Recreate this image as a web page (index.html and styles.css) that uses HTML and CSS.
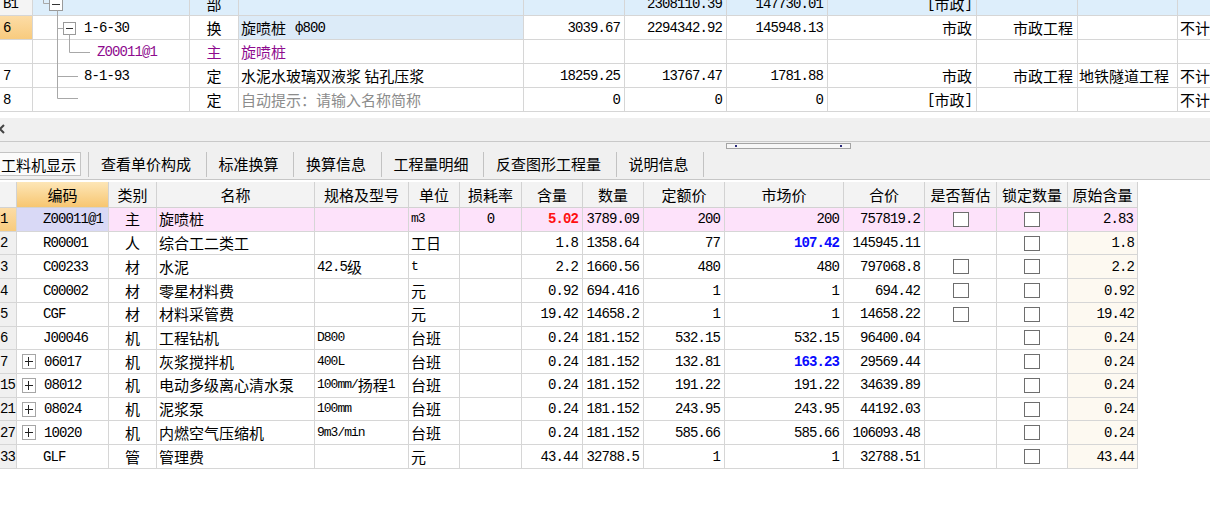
FILE: index.html
```html
<!DOCTYPE html>
<html lang="zh-CN">
<head>
<meta charset="utf-8">
<link rel="stylesheet" href="styles.css">
</head>
<body>
<div class="top">
  <svg class="tree" width="120" height="112" viewBox="0 0 120 112">
    <path d="M43.5 0 V3.5 H49" class="tl"/>
    <rect x="49.5" y="-2.5" width="13" height="13" class="tb"/>
    <path d="M52 4.5 H60" class="tm"/>
    <path d="M57.5 10.5 V98.5" class="tl"/>
    <path d="M57.5 28.5 H63" class="tl"/>
    <rect x="63.5" y="22.5" width="12" height="12" class="tb"/>
    <path d="M66 28.5 H73" class="tm"/>
    <path d="M69.5 34.5 V52.5 H90" class="tl"/>
    <path d="M57.5 76.5 H78" class="tl"/>
    <path d="M57.5 98.5 H78" class="tl"/>
  </svg>
  <div class="tgrid">
    <div class="tr b1">
      <div class="c num"><span class="n">B1</span></div>
      <div class="c"></div>
      <div class="c ctr">部</div>
      <div class="c"></div>
      <div class="c r"></div>
      <div class="c r"><span class="n">2308110.39</span></div>
      <div class="c r"><span class="n">147730.01</span></div>
      <div class="c r"><span class="n">[</span>市政<span class="n">]</span></div>
      <div class="c"></div>
      <div class="c"></div>
      <div class="c"></div>
    </div>
    <div class="tr">
      <div class="c num sel"><span class="n">6</span></div>
      <div class="c code1"><span class="n">1-6-30</span></div>
      <div class="c ctr">换</div>
      <div class="c blue">旋喷桩<span class="n phi">ф800</span></div>
      <div class="c r"><span class="n">3039.67</span></div>
      <div class="c r"><span class="n">2294342.92</span></div>
      <div class="c r"><span class="n">145948.13</span></div>
      <div class="c r">市政</div>
      <div class="c r">市政工程</div>
      <div class="c"></div>
      <div class="c">不计</div>
    </div>
    <div class="tr purple">
      <div class="c num"></div>
      <div class="c code2"><span class="n">Z00011@1</span></div>
      <div class="c ctr">主</div>
      <div class="c">旋喷桩</div>
      <div class="c"></div>
      <div class="c"></div>
      <div class="c"></div>
      <div class="c"></div>
      <div class="c"></div>
      <div class="c"></div>
      <div class="c"></div>
    </div>
    <div class="tr">
      <div class="c num"><span class="n">7</span></div>
      <div class="c code1"><span class="n">8-1-93</span></div>
      <div class="c ctr">定</div>
      <div class="c">水泥水玻璃双液浆 钻孔压浆</div>
      <div class="c r"><span class="n">18259.25</span></div>
      <div class="c r"><span class="n">13767.47</span></div>
      <div class="c r"><span class="n">1781.88</span></div>
      <div class="c r">市政</div>
      <div class="c r">市政工程</div>
      <div class="c tight">地铁隧道工程</div>
      <div class="c">不计</div>
    </div>
    <div class="tr">
      <div class="c num"><span class="n">8</span></div>
      <div class="c"></div>
      <div class="c ctr">定</div>
      <div class="c hint">自动提示：请输入名称简称</div>
      <div class="c r"><span class="n">0</span></div>
      <div class="c r"><span class="n">0</span></div>
      <div class="c r"><span class="n">0</span></div>
      <div class="c r"><span class="n">[</span>市政<span class="n">]</span></div>
      <div class="c"></div>
      <div class="c"></div>
      <div class="c">不计</div>
    </div>
  </div>
</div>

<div class="gap"></div>
<div class="bar1">
  <svg class="chev" width="8" height="10" viewBox="0 0 8 10"><path d="M5 1 L1 5 L5 9" /></svg>
</div>
<div class="band">
  <div class="scrollrow">
    <div class="scroller"><i></i><i></i></div>
  </div>
  <div class="tabs">
    <div class="tab active">工料机显示</div>
    <div class="sep"></div>
    <div class="tab">查看单价构成</div>
    <div class="sep"></div>
    <div class="tab">标准换算</div>
    <div class="sep"></div>
    <div class="tab">换算信息</div>
    <div class="sep"></div>
    <div class="tab">工程量明细</div>
    <div class="sep"></div>
    <div class="tab">反查图形工程量</div>
    <div class="sep"></div>
    <div class="tab">说明信息</div>
    <div class="sep"></div>
  </div>
</div>
<div class="spacer"></div>

<div class="bgrid">
  <div class="br head">
    <div class="h"></div>
    <div class="h hsel">编码</div>
    <div class="h">类别</div>
    <div class="h">名称</div>
    <div class="h">规格及型号</div>
    <div class="h">单位</div>
    <div class="h">损耗率</div>
    <div class="h">含量</div>
    <div class="h">数量</div>
    <div class="h">定额价</div>
    <div class="h">市场价</div>
    <div class="h">合价</div>
    <div class="h">是否暂估</div>
    <div class="h">锁定数量</div>
    <div class="h">原始含量</div>
  </div>

  <div class="br pink">
    <div class="d rn sel"><span class="n">1</span></div>
    <div class="d code lav"><span class="n">Z00011@1</span></div>
    <div class="d ctr">主</div>
    <div class="d">旋喷桩</div>
    <div class="d"></div>
    <div class="d"><span class="n sm">m3</span></div>
    <div class="d ctr"><span class="n">0</span></div>
    <div class="d r"><span class="n red">5.02</span></div>
    <div class="d r"><span class="n">3789.09</span></div>
    <div class="d r"><span class="n">200</span></div>
    <div class="d r"><span class="n">200</span></div>
    <div class="d r"><span class="n">757819.2</span></div>
    <div class="d ctr"><span class="cb"></span></div>
    <div class="d ctr"><span class="cb"></span></div>
    <div class="d r"><span class="n">2.83</span></div>
  </div>

  <div class="br">
    <div class="d rn"><span class="n">2</span></div>
    <div class="d code"><span class="n">R00001</span></div>
    <div class="d ctr">人</div>
    <div class="d">综合工二类工</div>
    <div class="d"></div>
    <div class="d">工日</div>
    <div class="d"></div>
    <div class="d r"><span class="n">1.8</span></div>
    <div class="d r"><span class="n">1358.64</span></div>
    <div class="d r"><span class="n">77</span></div>
    <div class="d r"><span class="n blu">107.42</span></div>
    <div class="d r"><span class="n">145945.11</span></div>
    <div class="d"></div>
    <div class="d ctr"><span class="cb"></span></div>
    <div class="d r orig"><span class="n">1.8</span></div>
  </div>

  <div class="br">
    <div class="d rn"><span class="n">3</span></div>
    <div class="d code"><span class="n">C00233</span></div>
    <div class="d ctr">材</div>
    <div class="d">水泥</div>
    <div class="d"><span class="n">42.5</span>级</div>
    <div class="d"><span class="n sm">t</span></div>
    <div class="d"></div>
    <div class="d r"><span class="n">2.2</span></div>
    <div class="d r"><span class="n">1660.56</span></div>
    <div class="d r"><span class="n">480</span></div>
    <div class="d r"><span class="n">480</span></div>
    <div class="d r"><span class="n">797068.8</span></div>
    <div class="d ctr"><span class="cb"></span></div>
    <div class="d ctr"><span class="cb"></span></div>
    <div class="d r orig"><span class="n">2.2</span></div>
  </div>

  <div class="br">
    <div class="d rn"><span class="n">4</span></div>
    <div class="d code"><span class="n">C00002</span></div>
    <div class="d ctr">材</div>
    <div class="d">零星材料费</div>
    <div class="d"></div>
    <div class="d">元</div>
    <div class="d"></div>
    <div class="d r"><span class="n">0.92</span></div>
    <div class="d r"><span class="n">694.416</span></div>
    <div class="d r"><span class="n">1</span></div>
    <div class="d r"><span class="n">1</span></div>
    <div class="d r"><span class="n">694.42</span></div>
    <div class="d ctr"><span class="cb"></span></div>
    <div class="d ctr"><span class="cb"></span></div>
    <div class="d r orig"><span class="n">0.92</span></div>
  </div>

  <div class="br">
    <div class="d rn"><span class="n">5</span></div>
    <div class="d code"><span class="n">CGF</span></div>
    <div class="d ctr">材</div>
    <div class="d">材料采管费</div>
    <div class="d"></div>
    <div class="d">元</div>
    <div class="d"></div>
    <div class="d r"><span class="n">19.42</span></div>
    <div class="d r"><span class="n">14658.2</span></div>
    <div class="d r"><span class="n">1</span></div>
    <div class="d r"><span class="n">1</span></div>
    <div class="d r"><span class="n">14658.22</span></div>
    <div class="d ctr"><span class="cb"></span></div>
    <div class="d ctr"><span class="cb"></span></div>
    <div class="d r orig"><span class="n">19.42</span></div>
  </div>

  <div class="br">
    <div class="d rn"><span class="n">6</span></div>
    <div class="d code"><span class="n">J00046</span></div>
    <div class="d ctr">机</div>
    <div class="d">工程钻机</div>
    <div class="d"><span class="n sm">D800</span></div>
    <div class="d">台班</div>
    <div class="d"></div>
    <div class="d r"><span class="n">0.24</span></div>
    <div class="d r"><span class="n">181.152</span></div>
    <div class="d r"><span class="n">532.15</span></div>
    <div class="d r"><span class="n">532.15</span></div>
    <div class="d r"><span class="n">96400.04</span></div>
    <div class="d"></div>
    <div class="d ctr"><span class="cb"></span></div>
    <div class="d r orig"><span class="n">0.24</span></div>
  </div>

  <div class="br">
    <div class="d rn"><span class="n">7</span></div>
    <div class="d code plus"><span class="pl"></span><span class="n">06017</span></div>
    <div class="d ctr">机</div>
    <div class="d">灰浆搅拌机</div>
    <div class="d"><span class="n sm">400L</span></div>
    <div class="d">台班</div>
    <div class="d"></div>
    <div class="d r"><span class="n">0.24</span></div>
    <div class="d r"><span class="n">181.152</span></div>
    <div class="d r"><span class="n">132.81</span></div>
    <div class="d r"><span class="n blu">163.23</span></div>
    <div class="d r"><span class="n">29569.44</span></div>
    <div class="d"></div>
    <div class="d ctr"><span class="cb"></span></div>
    <div class="d r orig"><span class="n">0.24</span></div>
  </div>

  <div class="br">
    <div class="d rn"><span class="n">15</span></div>
    <div class="d code plus"><span class="pl"></span><span class="n">08012</span></div>
    <div class="d ctr">机</div>
    <div class="d">电动多级离心清水泵</div>
    <div class="d"><span class="n sm">100mm/</span>扬程<span class="n sm">1</span></div>
    <div class="d">台班</div>
    <div class="d"></div>
    <div class="d r"><span class="n">0.24</span></div>
    <div class="d r"><span class="n">181.152</span></div>
    <div class="d r"><span class="n">191.22</span></div>
    <div class="d r"><span class="n">191.22</span></div>
    <div class="d r"><span class="n">34639.89</span></div>
    <div class="d"></div>
    <div class="d ctr"><span class="cb"></span></div>
    <div class="d r orig"><span class="n">0.24</span></div>
  </div>

  <div class="br">
    <div class="d rn"><span class="n">21</span></div>
    <div class="d code plus"><span class="pl"></span><span class="n">08024</span></div>
    <div class="d ctr">机</div>
    <div class="d">泥浆泵</div>
    <div class="d"><span class="n sm">100mm</span></div>
    <div class="d">台班</div>
    <div class="d"></div>
    <div class="d r"><span class="n">0.24</span></div>
    <div class="d r"><span class="n">181.152</span></div>
    <div class="d r"><span class="n">243.95</span></div>
    <div class="d r"><span class="n">243.95</span></div>
    <div class="d r"><span class="n">44192.03</span></div>
    <div class="d"></div>
    <div class="d ctr"><span class="cb"></span></div>
    <div class="d r orig"><span class="n">0.24</span></div>
  </div>

  <div class="br">
    <div class="d rn"><span class="n">27</span></div>
    <div class="d code plus"><span class="pl"></span><span class="n">10020</span></div>
    <div class="d ctr">机</div>
    <div class="d">内燃空气压缩机</div>
    <div class="d"><span class="n sm">9m3/min</span></div>
    <div class="d">台班</div>
    <div class="d"></div>
    <div class="d r"><span class="n">0.24</span></div>
    <div class="d r"><span class="n">181.152</span></div>
    <div class="d r"><span class="n">585.66</span></div>
    <div class="d r"><span class="n">585.66</span></div>
    <div class="d r"><span class="n">106093.48</span></div>
    <div class="d"></div>
    <div class="d ctr"><span class="cb"></span></div>
    <div class="d r orig"><span class="n">0.24</span></div>
  </div>

  <div class="br">
    <div class="d rn"><span class="n">33</span></div>
    <div class="d code"><span class="n">GLF</span></div>
    <div class="d ctr">管</div>
    <div class="d">管理费</div>
    <div class="d"></div>
    <div class="d">元</div>
    <div class="d"></div>
    <div class="d r"><span class="n">43.44</span></div>
    <div class="d r"><span class="n">32788.5</span></div>
    <div class="d r"><span class="n">1</span></div>
    <div class="d r"><span class="n">1</span></div>
    <div class="d r"><span class="n">32788.51</span></div>
    <div class="d"></div>
    <div class="d ctr"><span class="cb"></span></div>
    <div class="d r orig"><span class="n">43.44</span></div>
  </div>
</div>
</body>
</html>
```

FILE: styles.css
```css
* { box-sizing: border-box; }
html, body { margin: 0; padding: 0; background: #ffffff; }
body {
  width: 1210px;
  height: 516px;
  overflow: hidden;
  font-family: "Noto Sans CJK SC", "Noto Sans", sans-serif;
  font-size: 15px;
  color: #000;
}

.n {
  font-family: "Liberation Mono", "DejaVu Sans Mono", monospace;
  font-size: 14px;
  letter-spacing: -0.9px;
}
.n.sm { font-size: 13px; letter-spacing: -1px; }
.n.phi { margin-left: 9px; }

/* ---------- top table ---------- */
.top {
  position: relative;
  height: 112px;
  overflow: hidden;
}
.tree {
  position: absolute;
  left: 0;
  top: 0;
  z-index: 2;
}
.tree .tl { fill: none; stroke: #a8a8a8; stroke-width: 1; }
.tree .tb { fill: #fff; stroke: #9a9a9a; stroke-width: 1; }
.tree .tm { fill: none; stroke: #333; stroke-width: 1; }

.tgrid { margin-top: -8px; width: 1240px; }
.tr {
  display: grid;
  grid-template-columns: 33px 157px 49px 285px 101px 102px 101px 149px 101px 100px 62px;
  height: 24px;
}
.c {
  border-right: 1px solid #d6d6d6;
  border-bottom: 1px solid #d6d6d6;
  display: flex;
  align-items: center;
  padding: 0 2px;
  white-space: nowrap;
  overflow: hidden;
  line-height: 20px;
}
.c.r { justify-content: flex-end; padding-right: 4px; }
.c.ctr { justify-content: center; }
.c.num { padding-left: 3px; }
.c.tight { padding-left: 1px; }
.c.code1 { padding-left: 51px; }
.c.code2 { padding-left: 64px; }
.c.blue { background: #dcebf8; }
.c.hint { color: #8c8c8c; }
.tr.b1 .c { background: #ddeefb; }
.tr.b1 .c.num { background: #f4f4f4; }
.sel { background: linear-gradient(#fcdca6, #f8cb7e); }
.tr .c.sel { background: linear-gradient(#fcdca6, #f8cb7e); }
.tr.purple { color: #8e0a8e; }

/* ---------- middle band ---------- */
.gap { height: 6px; }
.bar1 {
  height: 24px;
  background: #f0f0f0;
  border-bottom: 1px solid #c9c9c9;
  display: flex;
  align-items: flex-start;
  padding-top: 6px;
}
.chev path { fill: none; stroke: #444; stroke-width: 2; }
.chev { margin-left: -1px; }

.band {
  background: #f0f0f0;
  border-bottom: 1px solid #c6c6c6;
}
.scrollrow { height: 8px; padding-top: 1px; }
.scroller {
  margin-left: 726px;
  width: 125px;
  height: 6px;
  border: 1px solid #a4a4a4;
  background: #f7f7f7;
  display: flex;
  justify-content: space-between;
  align-items: center;
  padding: 0 8px;
}
.scroller i { display: block; width: 2px; height: 2px; background: #2a2a7a; }

.tabs {
  height: 29px;
  display: flex;
  align-items: flex-start;
  padding-top: 2px;
}
.tab {
  height: 24px;
  line-height: 23px;
  padding: 0 14.5px 0 12px;
  white-space: nowrap;
}
.tab.active {
  margin-left: -6px;
  margin-right: 7px;
  padding: 0 4px 0 6px;
  background: #fbfbfb;
  border: 1px solid #c4c4c4;
}
.sep { width: 1px; height: 25px; background: #c2c2c2; }
.spacer { height: 2px; }

/* ---------- bottom table ---------- */
.bgrid { width: 1138px; }
.br {
  display: grid;
  grid-template-columns: 17px 92px 48px 158px 94px 51px 62px 61px 61px 81px 119px 81px 72px 71px 70px;
  height: 23.73px;
}
.br.head { height: 26px; }
.h {
  background: #f3f3f3;
  border-right: 1px solid #d2d2d2;
  border-bottom: 1px solid #d2d2d2;
  display: flex;
  align-items: center;
  justify-content: center;
  white-space: nowrap;
  overflow: hidden;
}
.h.hsel { background: linear-gradient(#fde6b7, #f7c671); }
.d {
  border-right: 1px solid #d6d6d6;
  border-bottom: 1px solid #d6d6d6;
  display: flex;
  align-items: center;
  padding: 0 2px;
  white-space: nowrap;
  overflow: hidden;
  line-height: 20px;
}
.d.r { justify-content: flex-end; padding-right: 4px; }
.d.ctr { justify-content: center; }
.d.rn { background: #f0f0f0; padding: 0; }
.d.rn.sel { background: linear-gradient(#fcdca6, #f8cb7e); }
.d.code { padding-left: 26px; }
.d.code.plus { padding-left: 5px; }
.br.pink .d { background: #fde2fa; }
.br.pink .d.lav { background: #d9d9f6; }
.br.pink .d.rn { background: linear-gradient(#fcdca6, #f8cb7e); }
.d.orig { background: #fdf9f1; padding-right: 3px; }

.red { color: #ff1010; font-weight: bold; }
.blu { color: #0a0aff; font-weight: bold; }

.cb {
  display: inline-block;
  width: 16px;
  height: 15px;
  border: 1px solid #6e6e6e;
  background: #fff;
}
.pl {
  display: inline-block;
  position: relative;
  width: 14px;
  height: 15px;
  border: 1px solid #a6a6a6;
  background: #fff;
  margin-right: 8px;
}
.pl::before, .pl::after {
  content: "";
  position: absolute;
  background: #222;
}
.pl::before { left: 2px; right: 2px; top: 6px; height: 1px; }
.pl::after { top: 2px; bottom: 2px; left: 5px; width: 1px; }
```
